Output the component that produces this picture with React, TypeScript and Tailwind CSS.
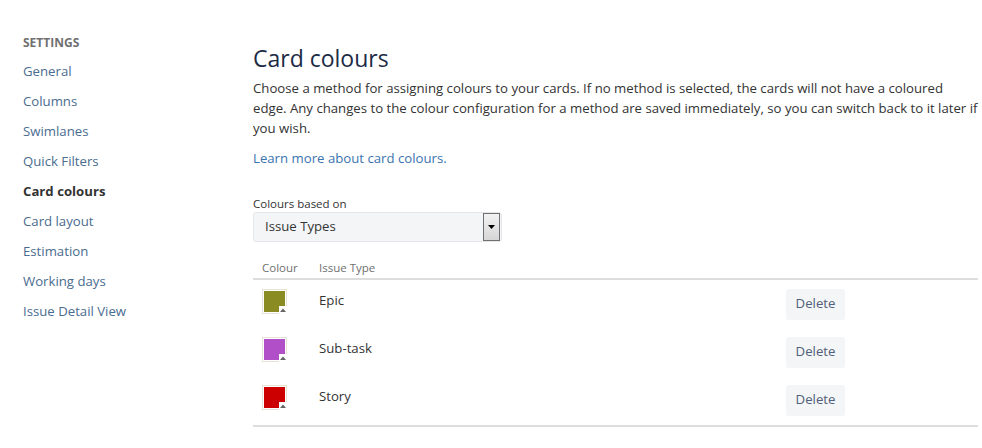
import React from "react";

const navItems = [
  "General",
  "Columns",
  "Swimlanes",
  "Quick Filters",
  "Card colours",
  "Card layout",
  "Estimation",
  "Working days",
  "Issue Detail View",
];

const rows = [
  { name: "Epic", color: "#8b8b24" },
  { name: "Sub-task", color: "#b04fc8" },
  { name: "Story", color: "#cc0000" },
];

function Swatch({ color }: { color: string }) {
  return (
    <div className="relative w-[25px] h-[25px] border border-[#e6e2d6] bg-white p-[1px]">
      <div className="w-full h-full" style={{ backgroundColor: color }} />
      <div className="absolute right-[-1px] bottom-[-1px] w-[8px] h-[8px] bg-white flex items-center justify-center">
        <svg width="6" height="4" viewBox="0 0 6 4">
          <path d="M0 4 L3 0.5 L6 4 Z" fill="#666" />
        </svg>
      </div>
    </div>
  );
}

export default function App() {
  return (
    <div
      className="w-[982px] h-[448px] bg-white flex text-[#333]"
      style={{ fontFamily: '"Open Sans", "Noto Sans", sans-serif' }}
    >
      <div className="w-[253px] shrink-0 pl-[23px] pt-[34px]">
        <div className="text-[12px] font-bold text-[#707070] h-[18px] leading-[18px] mb-[4px]">SETTINGS</div>
        <div className="flex flex-col">
          {navItems.map((n) => (
            <div
              key={n}
              className={
                "h-[30px] leading-[30px] text-[13.2px] " +
                (n === "Card colours" ? "font-bold text-[#333]" : "text-[#4a6c8f]")
              }
            >
              {n}
            </div>
          ))}
        </div>
      </div>
      <div className="flex-1 min-w-0 pr-[4px] pt-[42px]">
        <h1 className="text-[23px] leading-[32px] text-[#1d2b45]">Card colours</h1>
        <p className="mr-[-4px] text-[13.2px] leading-[20px] mt-[4px] text-[#333]">
          Choose a method for assigning colours to your cards. If no method is selected, the cards will not have a coloured
          <br />
          edge. Any changes to the colour configuration for a method are saved immediately, so you can switch back to it later if you wish.
        </p>
        <div className="mt-[10px] text-[13.2px] leading-[20px] text-[#3b73af]">Learn more about card colours.</div>
        <div className="mt-[28px] text-[11.5px] leading-[16px] text-[#333]">Colours based on</div>
        <div className="mt-[0px] w-[249px] h-[30px] bg-[#f4f5f7] rounded-[3px] border border-[#e4e6ea] flex items-center justify-between pl-[11px] pr-[1px]">
          <span className="text-[13.2px] text-[#333]">Issue Types</span>
          <div className="w-[17px] h-[28px] border border-[#707070] bg-gradient-to-b from-[#f2f2f2] to-[#d6d6d6] flex items-center justify-center">
            <svg width="7" height="4" viewBox="0 0 7 4">
              <path d="M0 0 L7 0 L3.5 4 Z" fill="#000" />
            </svg>
          </div>
        </div>
        <div className="mt-[16px] flex items-center h-[22px] text-[11.5px] text-[#707070] border-b-2 border-[#dddddd]">
          <div className="w-[66px] pl-[9px]">Colour</div>
          <div>Issue Type</div>
        </div>
        <div>
          {rows.map((r) => (
            <div key={r.name} className="h-[48px] flex items-center">
              <div className="w-[66px] pl-[9px] pb-[6px]">
                <Swatch color={r.color} />
              </div>
              <div className="flex-1 text-[13.2px] text-[#333] pb-[6px]">{r.name}</div>
              <div className="w-[192px] pt-[0px]">
                <button className="w-[59px] h-[31px] bg-[#f4f5f7] rounded-[3px] text-[13.2px] text-[#505f79]">
                  Delete
                </button>
              </div>
            </div>
          ))}
        </div>
        <div className="mt-[1px] border-b-2 border-[#dddddd]" />
      </div>
    </div>
  );
}
